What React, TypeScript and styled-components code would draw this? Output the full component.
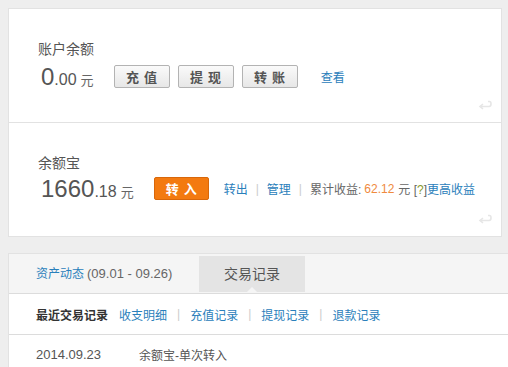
import React from 'react';
import styled, { createGlobalStyle } from 'styled-components';

const GlobalStyle = createGlobalStyle`
  html, body {
    margin: 0;
    padding: 0;
    background: #eeeeee;
  }
  body {
    font-family: "Liberation Sans", "Noto Sans CJK SC", sans-serif;
    color: #555;
    width: 508px;
    height: 367px;
    overflow: hidden;
  }
`;

const Page = styled.div`
  padding: 8px 0 0 8px;
`;

const Card = styled.div`
  width: 494px;
  box-sizing: border-box;
  background: #fff;
  border: 1px solid #e2e2e2;
  border-bottom: none;
`;

const Section = styled.div`
  position: relative;
  height: 114px;
  box-sizing: border-box;
  padding: 31px 0 0 29px;
  border-bottom: 1px solid #e2e2e2;
`;

const Label = styled.div`
  font-size: 14px;
  line-height: 18px;
  color: #555;
`;

const AmountRow = styled.div`
  display: flex;
  align-items: center;
  margin-top: ${(p: { $gap?: number }) => p.$gap ?? 10}px;
  height: 23px;
`;

const Amount = styled.div`
  display: flex;
  align-items: baseline;
  color: #555;
  margin-right: 20px;
  padding-left: 3px;
`;

const Int = styled.span`
  font-size: 24px;
`;

const Dec = styled.span`
  font-size: 16px;
`;

const Unit = styled.span`
  font-size: 13px;
  margin-left: 4px;
  color: #666;
`;

const GrayButton = styled.button`
  width: 56px;
  height: 23px;
  margin-right: 8px;
  padding: 0 0 0 5px;
  border: 1px solid #b3b3b3;
  border-radius: 2px;
  background: linear-gradient(#fafafa, #e7e7e7);
  color: #555;
  font-family: inherit;
  font-size: 13px;
  font-weight: bold;
  letter-spacing: 5px;
`;

const OrangeButton = styled(GrayButton)`
  width: 55px;
  margin-right: 15px;
  border-color: #d8670a;
  background: #f37a10;
  color: #fff;
`;

const Link = styled.a`
  color: #2a80bb;
  font-size: 12px;
  text-decoration: none;
  margin-left: ${(p: { $ml?: number }) => p.$ml ?? 0}px;
`;

const Sep = styled.span`
  color: #ccc;
  font-size: 12px;
  margin: 0 8px;
`;

const Muted = styled.span`
  color: #666;
  font-size: 12px;
`;

const Orange = styled.span`
  color: #ef8a3e;
  font-size: 12px;
  margin: 0 4px 0 3px;
`;

const Green = styled.span`
  color: #8a9a2a;
`;

const ReturnIcon = styled.svg`
  position: absolute;
  right: 9px;
  bottom: 12px;
`;

const Panel = styled.div`
  margin-top: 16px;
  width: 520px;
  background: #fff;
  border-top: 1px solid #e2e2e2;
  border-left: 1px solid #e2e2e2;
`;

const TabBar = styled.div`
  display: flex;
  align-items: flex-start;
  height: 40px;
  box-sizing: border-box;
  padding-top: 2px;
  background: #f5f5f5;
  border-bottom: 1px solid #dcdcdc;
`;

const Tab = styled.div`
  width: 190px;
  box-sizing: border-box;
  padding-left: 27px;
  height: 36px;
  line-height: 36px;
  font-size: 12px;
  color: #666;
`;

const Range = styled.span`
  font-size: 13px;
  margin-left: 3px;
`;

const ActiveTab = styled.div`
  position: relative;
  width: 106px;
  height: 36px;
  line-height: 36px;
  text-align: center;
  background: #e4e4e4;
  color: #555;
  font-size: 14px;

  &::after {
    content: '';
    position: absolute;
    left: 48px;
    bottom: 0;
    border: 5px solid transparent;
    border-bottom-color: #f5f5f5;
    border-top: none;
  }
`;

const FilterRow = styled.div`
  display: flex;
  align-items: center;
  height: 41px;
  box-sizing: border-box;
  padding-left: 27px;
  border-bottom: 1px solid #dcdcdc;
`;

const FilterTitle = styled.span`
  font-size: 12px;
  font-weight: bold;
  color: #333;
  margin-right: 11px;
`;

const FilterSep = styled.span`
  color: #ccc;
  font-size: 12px;
  margin: 0 10px;
`;

const RecordRow = styled.div`
  display: flex;
  align-items: center;
  height: 38px;
  padding-left: 27px;
  font-size: 12px;
  color: #555;
`;

const DateCell = styled.span`
  width: 103px;
  font-size: 13px;
`;

const Return = () => (
  <ReturnIcon width="14" height="10" viewBox="0 0 14 10">
    <path
      d="M10 1.5 H11.5 Q13 1.5 13 4 Q13 6.5 11 6.5 H2.5 M5 4 L2 6.5 L5 9"
      fill="none"
      stroke="#e6e6e6"
      strokeWidth="1.6"
    />
  </ReturnIcon>
);

const App: React.FC = () => {
  return (
    <>
      <GlobalStyle />
      <Page>
        <Card>
          <Section>
            <Label>账户余额</Label>
            <AmountRow $gap={7}>
              <Amount>
                <Int>0</Int>
                <Dec>.00</Dec>
                <Unit>元</Unit>
              </Amount>
              <GrayButton>充值</GrayButton>
              <GrayButton>提现</GrayButton>
              <GrayButton>转账</GrayButton>
              <Link $ml={15}>查看</Link>
            </AmountRow>
            <Return />
          </Section>
          <Section>
            <Label>余额宝</Label>
            <AmountRow $gap={5}>
              <Amount>
                <Int>1660</Int>
                <Dec>.18</Dec>
                <Unit>元</Unit>
              </Amount>
              <OrangeButton>转入</OrangeButton>
              <Link>转出</Link>
              <Sep>|</Sep>
              <Link>管理</Link>
              <Sep>|</Sep>
              <Muted>累计收益:</Muted>
              <Orange>62.12</Orange>
              <Muted>
                元 [<Green>?</Green>]
              </Muted>
              <Link>更高收益</Link>
            </AmountRow>
            <Return />
          </Section>
        </Card>
        <Panel>
          <TabBar>
            <Tab>
              <Link>资产动态</Link>
              <Range>(09.01 - 09.26)</Range>
            </Tab>
            <ActiveTab>交易记录</ActiveTab>
          </TabBar>
          <FilterRow>
            <FilterTitle>最近交易记录</FilterTitle>
            <Link>收支明细</Link>
            <FilterSep>|</FilterSep>
            <Link>充值记录</Link>
            <FilterSep>|</FilterSep>
            <Link>提现记录</Link>
            <FilterSep>|</FilterSep>
            <Link>退款记录</Link>
          </FilterRow>
          <RecordRow>
            <DateCell>2014.09.23</DateCell>
            <span>余额宝-单次转入</span>
          </RecordRow>
        </Panel>
      </Page>
    </>
  );
};

export default App;
